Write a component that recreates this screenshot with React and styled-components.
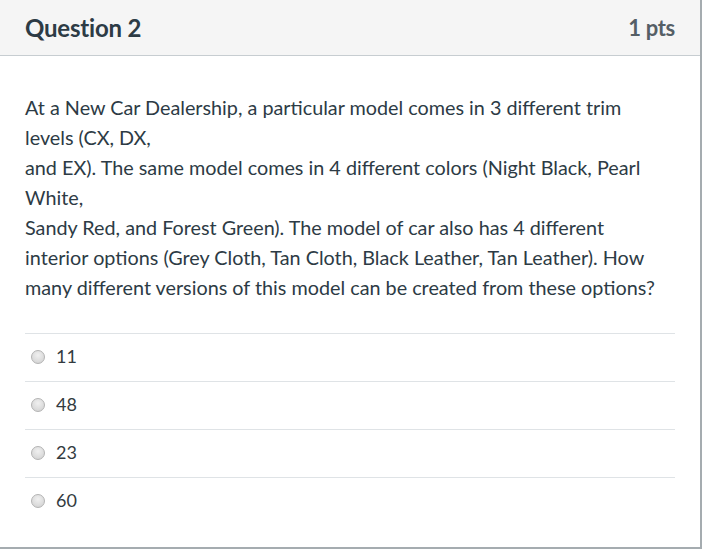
import React from "react";
import styled, { createGlobalStyle } from "styled-components";

const GlobalStyle = createGlobalStyle`
  html, body {
    margin: 0;
    padding: 0;
    background: #ffffff;
  }
  body {
    font-family: Lato, "Open Sans", sans-serif;
    color: #2d3b45;
  }
`;

const Card = styled.div`
  width: 700px;
  height: 547px;
  border-right: 2px solid #a5acb0;
  border-bottom: 2px solid #a5acb0;
  background: #ffffff;
  display: flex;
  flex-direction: column;
`;

const Header = styled.div`
  height: 55px;
  background: #f5f5f5;
  border-bottom: 1px solid #c7cdd1;
  display: flex;
  align-items: center;
  justify-content: space-between;
  padding: 0 25px;
  flex-shrink: 0;

  h2 {
    margin: 0;
    font-size: 24px;
    font-weight: 700;
    color: #2d3b45;
    letter-spacing: -0.2px;
  }
  span {
    font-size: 22px;
    font-weight: 700;
    color: #555f66;
    letter-spacing: -0.3px;
  }
`;

const Body = styled.div`
  padding: 0 25px;
`;

const QuestionText = styled.p`
  margin: 36px 0 31px;
  font-size: 19.8px;
  line-height: 30px;
  color: #2d3b45;
  white-space: nowrap;
`;

const Answers = styled.div`
  display: flex;
  flex-direction: column;
`;

const AnswerRow = styled.label`
  height: 47px;
  box-sizing: content-box;
  border-top: 1px solid #dfe3e6;
  display: flex;
  align-items: center;
  gap: 11px;
  padding-left: 6px;
  padding-bottom: 0;
  font-size: 18px;
  color: #333b40;

  span:last-child {
    margin-top: -3px;
  }
`;

const Radio = styled.span`
  width: 14px;
  height: 14px;
  margin-top: -2px;
  border-radius: 50%;
  border: 1px solid #b3b3b3;
  background: radial-gradient(circle at 50% 35%, #f0f0f0, #cfcfcf);
  box-sizing: border-box;
  flex-shrink: 0;
`;

const lines = [
  "At a New Car Dealership, a particular model comes in 3 different trim",
  "levels (CX, DX,",
  "and EX). The same model comes in 4 different colors (Night Black, Pearl",
  "White,",
  "Sandy Red, and Forest Green). The model of car also has 4 different",
  "interior options (Grey Cloth, Tan Cloth, Black Leather, Tan Leather). How",
  "many different versions of this model can be created from these options?",
];

const answers = ["11", "48", "23", "60"];

export default function App() {
  return (
    <>
      <GlobalStyle />
      <Card>
        <Header>
          <h2>Question 2</h2>
          <span>1 pts</span>
        </Header>
        <Body>
          <QuestionText>
            {lines.map((l, i) => (
              <React.Fragment key={i}>
                {l}
                {i < lines.length - 1 && <br />}
              </React.Fragment>
            ))}
          </QuestionText>
          <Answers>
            {answers.map((a) => (
              <AnswerRow key={a}>
                <Radio />
                <span>{a}</span>
              </AnswerRow>
            ))}
          </Answers>
        </Body>
      </Card>
    </>
  );
}
